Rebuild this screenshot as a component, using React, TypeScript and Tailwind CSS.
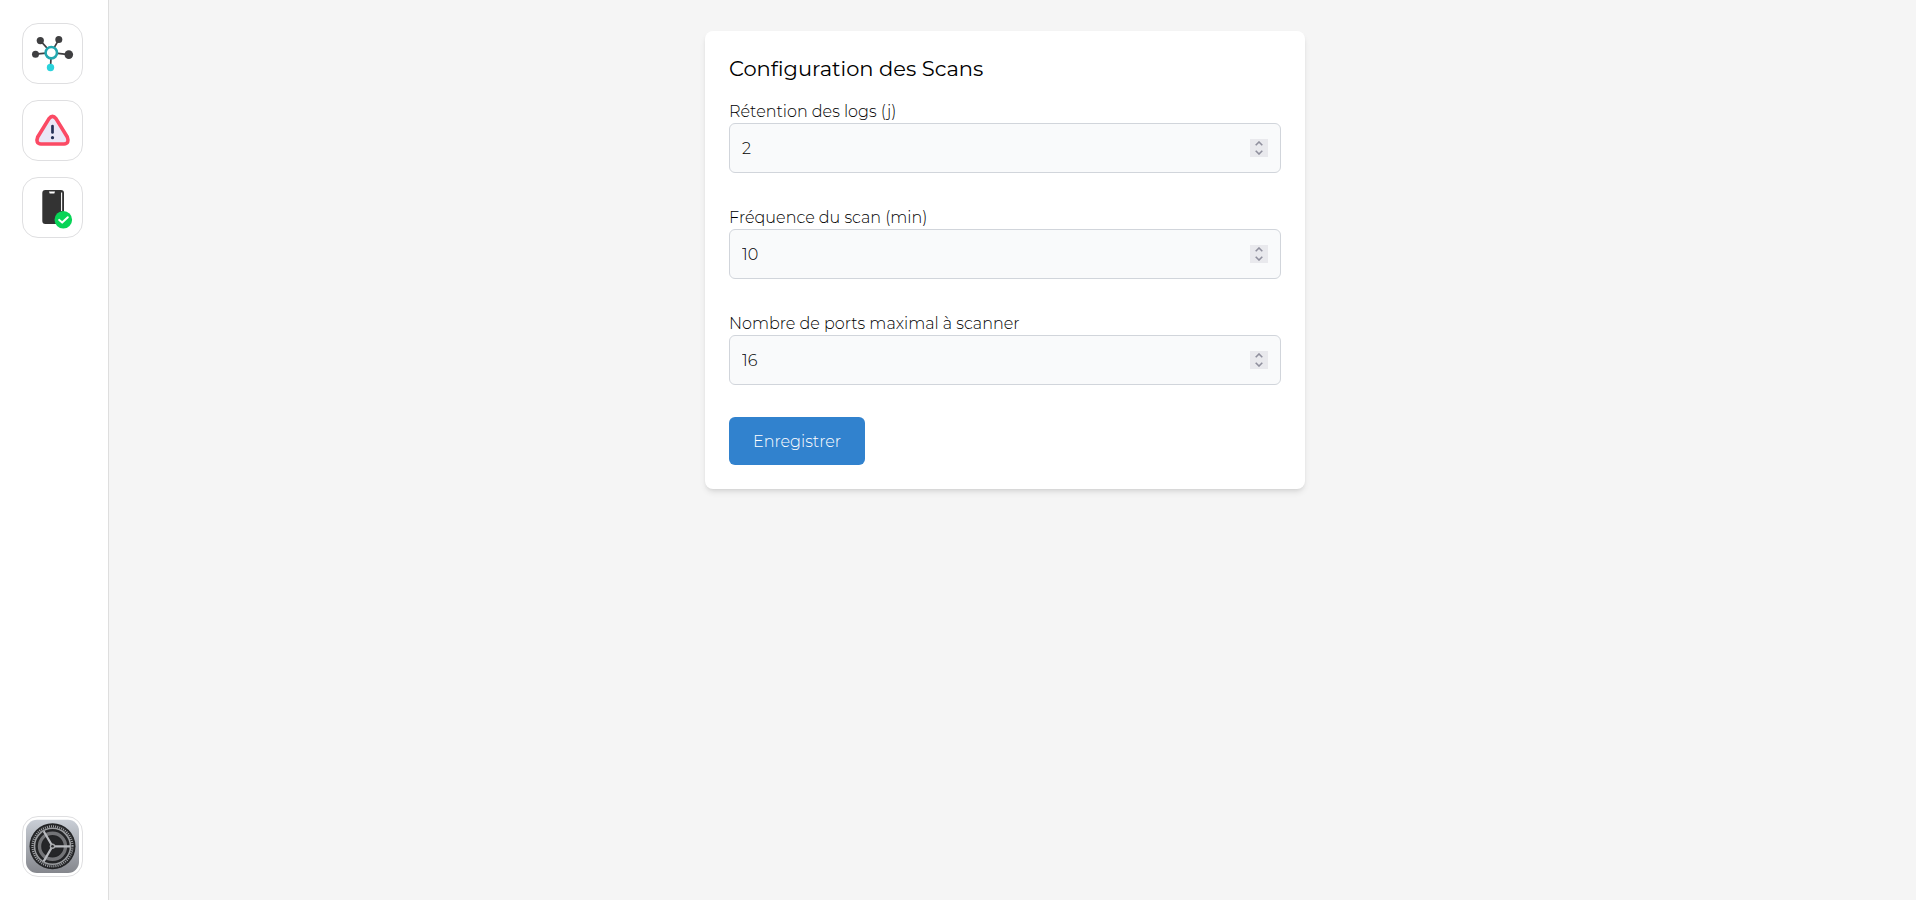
import { useState } from "react";

function NetworkIcon() {
  return (
    <svg viewBox="0 0 59 59" className="size-full" aria-hidden="true">
      <path
        d="M28.300 28.700 17.300 16.600M28.300 28.700 35.800 15.600M28.300 28.700 12.500 30.200M28.300 28.700 45.800 30.600M28.300 28.700 27.500 43"
        stroke="#3f3f41"
        strokeWidth="1.700"
      />
      <g fill="#3f3f41">
        <circle cx="17.300" cy="16.600" r="3.600" />
        <circle cx="35.800" cy="15.600" r="3.500" />
        <circle cx="12.500" cy="30.200" r="3.500" />
        <circle cx="45.800" cy="30.600" r="4.300" />
      </g>
      <circle cx="27.500" cy="43.500" r="3.700" fill="#2bd3dc" />
      <circle cx="28.300" cy="28.700" r="5.700" fill="#fff" stroke="#23a7af" strokeWidth="2.600" />
    </svg>
  );
}

function AlertIcon() {
  return (
    <svg viewBox="0 0 59 59" className="size-full" aria-hidden="true">
      <path
        d="M26 17.600Q29.500 13.200 33 17.600L44.300 36Q46.700 42.600 41 43H18Q12.200 42.600 14.700 36Z"
        fill="#e9e7f6"
        stroke="#fb4a64"
        strokeWidth="3.600"
        strokeLinejoin="round"
      />
      <path d="M29.500 25V31.500" stroke="#243056" strokeWidth="2.700" strokeLinecap="round" />
      <circle cx="29.500" cy="36.700" r="1.600" fill="#243056" />
    </svg>
  );
}

function DeviceIcon() {
  return (
    <svg viewBox="0 0 59 59" className="size-full" aria-hidden="true">
      <rect x="19.300" y="11.900" width="21.700" height="34.200" rx="3" fill="#333" />
      <path d="M26 13.500H32L31.300 15.500H26.700Z" fill="#fff" />
      <path d="M38.600 14.500V33" stroke="#fff" strokeWidth="1.100" />
      <circle cx="40.300" cy="41.800" r="8.800" fill="#08d457" />
      <path
        d="M36.200 41.900 39.200 44.600 44.800 39.300"
        fill="none"
        stroke="#fff"
        strokeWidth="2"
        strokeLinecap="round"
        strokeLinejoin="round"
      />
    </svg>
  );
}

function GearIcon() {
  return (
    <svg viewBox="0 0 59 59" className="size-full" aria-hidden="true">
      <defs>
        <linearGradient id="plate" x1="0" y1="0" x2="0" y2="1">
          <stop offset="0" stopColor="#c9ced6" />
          <stop offset="1" stopColor="#85878d" />
        </linearGradient>
      </defs>
      <rect x="3" y="2.700" width="53" height="53.300" rx="11" fill="url(#plate)" />
      <circle cx="29.500" cy="29.300" r="23" fill="#232426" />
      <circle cx="29.500" cy="29.300" r="20" fill="none" stroke="#a0a2a6" strokeWidth="2.200" strokeDasharray="1 1.094" />
      <circle cx="29.500" cy="29.300" r="18" fill="none" stroke="#9a9c9f" strokeWidth="1.600" />
      <circle cx="29.500" cy="29.300" r="13" fill="none" stroke="#737477" strokeWidth="3.400" />
      <circle cx="29.500" cy="29.300" r="10" fill="#252628" />
      <path
        d="M29.500 29.300H47M29.500 29.300 20.700 14.200M29.500 29.300 20.700 44.400"
        stroke="#b9bbbf"
        strokeWidth="2.200"
      />
      <circle cx="29.500" cy="29.300" r="2.700" fill="#a9abae" />
      <circle cx="29.500" cy="29.300" r="1.300" fill="#2b2c2e" />
    </svg>
  );
}

const tile =
  "block size-[61px] shrink-0 overflow-hidden rounded-2xl border border-[#dfdfe1] bg-white";

function Sidebar() {
  return (
    <nav
      aria-label="Navigation"
      className="flex w-[109px] shrink-0 flex-col gap-4 border-r border-[#dedede] bg-white py-[23px] pl-[22px]"
    >
      <a href="#reseau" aria-label="Réseau" className={tile}>
        <NetworkIcon />
      </a>
      <a href="#alertes" aria-label="Alertes" className={tile}>
        <AlertIcon />
      </a>
      <a href="#appareils" aria-label="Appareils" className={tile}>
        <DeviceIcon />
      </a>
      <a href="#configuration" aria-label="Configuration" className={`${tile} mt-auto`}>
        <GearIcon />
      </a>
    </nav>
  );
}

interface NumberFieldProps {
  id: string;
  label: string;
  initial: number;
}

function NumberField({ id, label, initial }: NumberFieldProps) {
  const [value, setValue] = useState(initial);
  return (
    <div className="mb-8">
      <label htmlFor={id} className="block pt-0.5 leading-[22px]">
        {label}
      </label>
      <div className="flex h-[50px] items-center rounded-md border border-[#d1d5db] bg-[#f9fafb] px-3">
        <input
          id={id}
          type="number"
          value={value}
          onChange={(e) => setValue(Number(e.target.value))}
          className="h-full min-w-0 flex-1 bg-transparent outline-none [appearance:textfield] [&::-webkit-inner-spin-button]:appearance-none"
        />
        <div className="flex h-[18px] w-[18px] flex-col bg-[#e9e9ed] text-[#8f8f9d]">
          <button
            type="button"
            aria-label={`Augmenter ${label}`}
            onClick={() => setValue(value + 1)}
            className="flex h-[9px] items-center justify-center"
          >
            <svg width="8" height="5" viewBox="0 0 8 5" fill="none" stroke="currentColor" strokeWidth="1.600">
              <path d="M.7 4.200 4 1 7.300 4.200" />
            </svg>
          </button>
          <button
            type="button"
            aria-label={`Diminuer ${label}`}
            onClick={() => setValue(value - 1)}
            className="flex h-[9px] items-center justify-center"
          >
            <svg width="8" height="5" viewBox="0 0 8 5" fill="none" stroke="currentColor" strokeWidth="1.600">
              <path d="M.7 .8 4 4 7.300 .8" />
            </svg>
          </button>
        </div>
      </div>
    </div>
  );
}

export default function App() {
  return (
    <div className="flex min-h-screen bg-[#f5f5f5] font-[Montserrat,Inter,sans-serif] text-base font-light text-black">
      <Sidebar />
      <main className="flex flex-1 items-start justify-center py-[31px] pr-[15px]">
        <form
          onSubmit={(e) => e.preventDefault()}
          className="w-full max-w-[600px] rounded-lg bg-white p-6 shadow-md"
        >
          <h1 className="mb-4 text-[21px] leading-7 font-normal">Configuration des Scans</h1>
          <NumberField id="retention" label="Rétention des logs (j)" initial={2} />
          <NumberField id="frequence" label="Fréquence du scan (min)" initial={10} />
          <NumberField id="ports" label="Nombre de ports maximal à scanner" initial={16} />
          <button type="submit" className="block h-12 rounded-md bg-[#3182ce] px-6 pt-0.5 text-white">
            Enregistrer
          </button>
        </form>
      </main>
    </div>
  );
}
